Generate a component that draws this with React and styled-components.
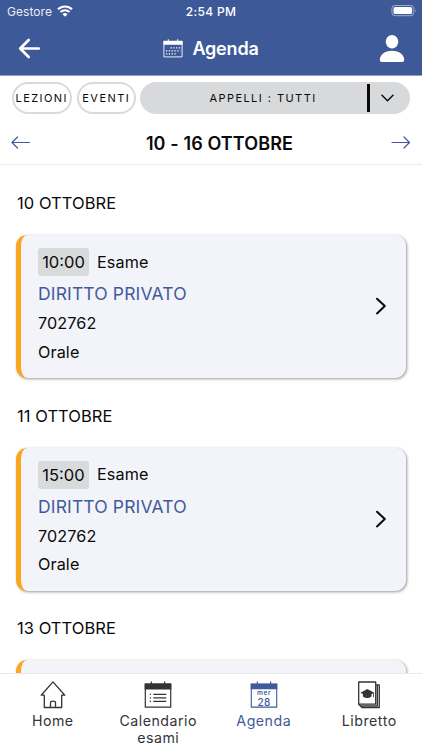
import React from 'react';
import styled, {createGlobalStyle} from 'styled-components';


const GlobalStyle = createGlobalStyle`
    * {
        box-sizing: border-box;
    }
    body {
        margin: 0;
        font-family: Inter, "Liberation Sans", sans-serif;
        color: #0a0a0a;
        background: #fff;
        overflow: hidden;
    }
    svg {
        display: block;
        flex-shrink: 0;
    }
    button {
        font-family: inherit;
        color: inherit;
        background: none;
        border: none;
        padding: 0;
    }
`
const Screen = styled.div`
    display: flex;
    flex-direction: column;
    width: 422px;
    height: 750px;
    overflow: hidden;
`
const TopArea = styled.div`
    height: 76px;
    flex-shrink: 0;
    background: #3d5997;
    border-bottom: 1px solid #8c9cc2;
    color: #fff;
`
const StatusBar = styled.div`
    display: grid;
    grid-template-columns: 1fr auto 1fr;
    align-items: center;
    height: 22px;
    padding: 0 5px 0 7px;
`
const Carrier = styled.div`
    display: flex;
    align-items: center;
    gap: 5px;
    font-size: 12px;
    letter-spacing: 0.05px;
    color: #e9edf6;
`
const Clock = styled.div`
    margin-right: 2px;
    font-size: 12px;
    font-weight: 500;
    letter-spacing: 0.3px;
`
const BatteryBox = styled.div`
    display: flex;
    justify-content: flex-end;
`
const Header = styled.header`
    display: flex;
    align-items: center;
    justify-content: space-between;
    height: 53px;
    padding: 0 17px 0 18px;
`
const HeaderTitle = styled.h1`
    display: flex;
    align-items: center;
    gap: 9px;
    margin: 0;
    padding-left: 2px;
    font-size: 18px;
    font-weight: 600;
    letter-spacing: -0.2px;
`
const Filters = styled.div`
    display: flex;
    align-items: center;
    height: 44px;
    padding: 0 12px;
    gap: 5px;
    flex-shrink: 0;
`
const Pill = styled.button`
    width: 60px;
    height: 32px;
    border: 2px solid #d9dadc;
    border-radius: 16px;
    font-size: 11px;
    letter-spacing: 1.45px;
    white-space: nowrap;
    display: flex;
    align-items: center;
    justify-content: center;
`
const Select = styled.div`
    display: flex;
    align-items: center;
    width: 270px;
    height: 32px;
    margin-left: -1px;
    border-radius: 16px;
    background: #d7d9db;
    flex-shrink: 0;
`
const SelectLabel = styled.span`
    flex: 1;
    padding-left: 19px;
    text-align: center;
    font-size: 11px;
    letter-spacing: 1.45px;
`
const SelectToggle = styled.button`
    display: flex;
    align-items: center;
    width: 43px;
    height: 28px;
    padding-left: 11px;
    border-left: 3px solid #0a0a0a;
`
const WeekBar = styled.div`
    display: flex;
    align-items: center;
    justify-content: space-between;
    height: 45px;
    padding: 0 11px;
    border-bottom: 1px solid #ebebed;
    flex-shrink: 0;
`
const WeekTitle = styled.h2`
    margin: 2px 0 0;
    padding-left: 17px;
    font-size: 18px;
    font-weight: 600;
    letter-spacing: 0.12px;
`
const Agenda = styled.main`
    flex: 1;
    min-height: 0;
    overflow: hidden;
    padding: 27px 16px 0;
`
const Day = styled.section`
    height: 212.7px;
`
const DayTitle = styled.h3`
    margin: 0 0 21px 1px;
    font-size: 16.5px;
    font-weight: 400;
    line-height: 22px;
    letter-spacing: 0.05px;
`
const Card = styled.article`
    display: flex;
    align-items: center;
    justify-content: space-between;
    height: 143px;
    padding: 13px 19px 0 17px;
    border-left: 5px solid #faa61f;
    border-radius: 11px;
    background: #f3f4f9;
    box-shadow: 1px 1px 3px rgba(0, 0, 0, 0.4);
`
const CardBody = styled.div`
    align-self: flex-start;
`
const FirstRow = styled.div`
    display: flex;
    align-items: center;
    gap: 8px;
    height: 28px;
    margin-bottom: 3px;
`
const Time = styled.span`
    width: 51px;
    height: 28px;
    border-radius: 3px;
    background: #d9dadc;
    font-size: 16.5px;
    line-height: 28px;
    text-align: center;
    letter-spacing: 0;
`
const Line = styled.div`
    font-size: 16.2px;
    line-height: 28.5px;
    letter-spacing: 0.1px;
`
const Course = styled.div`
    font-size: 17.5px;
    line-height: 30px;
    letter-spacing: 0.15px;
    color: #405a9b;
`
const Chevron = styled.div`
    margin-bottom: 14px;
`
const TabBar = styled.nav`
    display: grid;
    grid-template-columns: repeat(4, 1fr);
    height: 77px;
    flex-shrink: 0;
    padding-top: 7px;
    border-top: 1px solid #e9e9eb;
    background: #fff;
`
const Tab = styled.button`
    display: flex;
    flex-direction: column;
    align-items: center;
    justify-content: flex-start;
    gap: 4px;
    font-size: 14.2px;
    line-height: 16.5px;
    letter-spacing: 0.5px;
    color: ${props => props.$active ? '#405a9b' : '#333436'};
`

const WifiIcon = () => (
    <svg width="16" height="12" viewBox="0 0 16 12" fill="none" stroke="#fff" strokeWidth="2.1">
        <path d="M1 4.3a10 10 0 0 1 14 0" />
        <path d="M3.5 7.1a6.4 6.4 0 0 1 9 0" />
        <path d="M5.5 9.2a3.6 3.6 0 0 1 5 0L8 11.7z" fill="#fff" stroke="none" />
    </svg>
)
const BatteryIcon = () => (
    <svg width="26" height="12" viewBox="0 0 26 12">
        <rect x="0.9" y="0.5" width="21.8" height="10.2" rx="3" fill="none" stroke="#a9b5d2" strokeWidth="0.9" />
        <rect x="2.5" y="2.1" width="18.6" height="7" rx="1.6" fill="#fff" />
        <path d="M24 4q1.4 1.7 0 3.4z" fill="#a9b5d2" />
    </svg>
)
const BackIcon = () => (
    <svg width="23" height="22" viewBox="0 0 23 22" fill="none" stroke="#fff" strokeWidth="2.7" strokeLinecap="round" strokeLinejoin="round">
        <path d="M20.8 10.5H2.3M10.7 2 2.2 10.5l8.5 8.5" />
    </svg>
)
const MonthIcon = () => (
    <svg width="20" height="20" viewBox="0 0 20 20" fill="#fff">
        <path d="M.9 2.5h18.2v15.4H.9z" fill="none" stroke="#fff" strokeWidth="0.9" />
        <path d="M.5 1.8h19v4H.5zM4.8.2h1v2h-1zM14.2.2h1v2h-1z" />
        <path d="M7.5 8.8h9.8M3 11.8h14.3M3 14.8h10" stroke="#fff" strokeWidth="1.3" strokeDasharray="1.3 1.5" />
    </svg>
)
const UserIcon = () => (
    <svg width="26" height="28" viewBox="0 0 26 28" fill="#fff">
        <ellipse cx="13" cy="6.7" rx="6.3" ry="6.7" />
        <path d="M.8 24C1.8 18.5 7 15.7 13 15.7S24.2 18.5 25.2 24Q25.5 27 23 27H3Q.5 27 .8 24z" />
    </svg>
)
const ArrowIcon = ({right}) => (
    <svg width="20" height="13" viewBox="0 0 20 13" fill="none" stroke="#405a9b" strokeWidth="1.2" strokeLinecap="round" strokeLinejoin="round">
        <path d={right ? 'M1 6.5h17.5M13 1l5.5 5.5L13 12' : 'M18.5 6.5H1M6.5 1 1 6.5 6.5 12'} />
    </svg>
)
const DownIcon = () => (
    <svg width="13" height="8" viewBox="0 0 13 8" fill="none" stroke="#0a0a0a" strokeWidth="1.5" strokeLinecap="round">
        <path d="m1 1.3 5.5 5.5L12 1.3" />
    </svg>
)
const NextIcon = () => (
    <svg width="12" height="18" viewBox="0 0 12 18" fill="none" stroke="#0a0a0a" strokeWidth="2" strokeLinecap="round" strokeLinejoin="round">
        <path d="m2 1.7 7.8 7.4L2 16.4" />
    </svg>
)
const HomeIcon = () => (
    <svg width="26" height="28" viewBox="0 0 26 28" fill="none" stroke="#333436" strokeWidth="1.3" strokeLinejoin="round">
        <path d="M4.3 14.2H1.2L13 .9l11.8 13.3h-3.1v12.3H4.3z" />
        <path d="M10.5 26.5v-4.8q0-1.5 2.5-1.5t2.5 1.5v4.8" />
    </svg>
)
const ExamsIcon = () => (
    <svg width="28" height="28" viewBox="0 0 28 28" fill="#333436">
        <path d="M1.3 3.2h25.4v22.9H1.3z" fill="none" stroke="#333436" strokeWidth="1.2" />
        <path d="M.7 2.6h26.6v5.8H.7zM6.7.6h1.2v3H6.7zM20 .6h1.2v3H20z" />
        <path d="M5.8 13.3H7M5.8 16.9H7M5.8 20.4H7M9.3 13.3h13M9.3 16.9h13M9.3 20.4h13" stroke="#333436" strokeWidth="1.2" />
    </svg>
)
const AgendaIcon = () => (
    <svg width="28" height="28" viewBox="0 0 28 28" fill="#405a9b">
        <path d="M1.3 3.2h25.4v22.9H1.3z" fill="none" stroke="#405a9b" strokeWidth="1.1" />
        <path d="M.7 2.6h26.6v5.6H.7zM6.7.6h1.2v3H6.7zM20 .6h1.2v3H20z" />
        <text x="14.2" y="14.4" fontSize="6.5" fontWeight="600" letterSpacing="0.7" textAnchor="middle">mer</text>
        <text x="14.2" y="25" fontSize="10" fontWeight="500" letterSpacing="0.5" textAnchor="middle">28</text>
    </svg>
)
const BookIcon = () => (
    <svg width="24" height="28" viewBox="0 0 24 28" fill="none" stroke="#333436" strokeWidth="1.3" strokeLinejoin="round">
        <path d="M1.7 1h17v22.2h-17zM18.7 3.8h3.6v22.7H5L1.7 23.2M20.4 4v20.9H3.4" />
        <path d="m3.4 11.8 6.9-3.9 6.9 3.9-6.9 3.5z" fill="#333436" stroke="none" />
        <path d="M5.9 12.5v3q4.3 3.2 8.6 0v-3l-4.3 2.3zM16.2 11.8h.8v4.4h-.8z" fill="#333436" stroke="none" />
    </svg>
)

const days = [
    {date: '10 OTTOBRE', time: '10:00'},
    {date: '11 OTTOBRE', time: '15:00'},
    {date: '13 OTTOBRE'},
]

function Exam({time}) {
    return (
        <Card>
            {time &&
                <>
                    <CardBody>
                        <FirstRow>
                            <Time>{time}</Time>
                            <Line>Esame</Line>
                        </FirstRow>
                        <Course>DIRITTO PRIVATO</Course>
                        <Line>702762</Line>
                        <Line>Orale</Line>
                    </CardBody>
                    <Chevron><NextIcon /></Chevron>
                </>
            }
        </Card>
    )
}

function App() {
    return (
        <Screen>
            <GlobalStyle />
            <TopArea>
                <StatusBar>
                    <Carrier>Gestore <WifiIcon /></Carrier>
                    <Clock>2:54 PM</Clock>
                    <BatteryBox><BatteryIcon /></BatteryBox>
                </StatusBar>
                <Header>
                    <BackIcon />
                    <HeaderTitle><MonthIcon />Agenda</HeaderTitle>
                    <UserIcon />
                </Header>
            </TopArea>
            <Filters>
                <Pill>LEZIONI</Pill>
                <Pill>EVENTI</Pill>
                <Select>
                    <SelectLabel>APPELLI : TUTTI</SelectLabel>
                    <SelectToggle><DownIcon /></SelectToggle>
                </Select>
            </Filters>
            <WeekBar>
                <ArrowIcon />
                <WeekTitle>10 - 16 OTTOBRE</WeekTitle>
                <ArrowIcon right />
            </WeekBar>
            <Agenda>
                {days.map(day => (
                    <Day key={day.date}>
                        <DayTitle>{day.date}</DayTitle>
                        <Exam time={day.time} />
                    </Day>
                ))}
            </Agenda>
            <TabBar>
                <Tab><HomeIcon />Home</Tab>
                <Tab><ExamsIcon /><span>Calendario<br />esami</span></Tab>
                <Tab $active><AgendaIcon />Agenda</Tab>
                <Tab><BookIcon />Libretto</Tab>
            </TabBar>
        </Screen>
    )
}

export default App;
